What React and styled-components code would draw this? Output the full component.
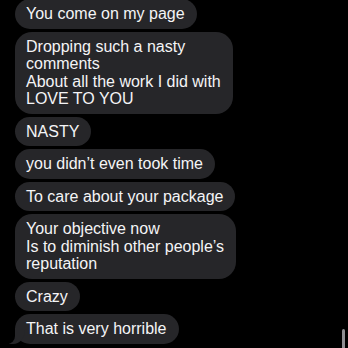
import React from 'react';
import styled, { createGlobalStyle } from 'styled-components';

const Global = createGlobalStyle`
  html, body {
    margin: 0;
    padding: 0;
    background: #000;
    overflow: hidden;
  }
`;

const Screen = styled.div`
  position: relative;
  width: 348px;
  height: 348px;
  background: #000;
  overflow: hidden;
`;

const Thread = styled.div`
  display: flex;
  flex-direction: column;
  align-items: flex-start;
  gap: 3px;
  padding: 0 0 0 15px;
  margin-top: -1px;
  font-family: "Liberation Sans", Arial, sans-serif;
`;

const Bubble = styled.div`
  position: relative;
  background: #262629;
  color: #f4f4f6;
  font-size: 16px;
  line-height: 17.5px;
  padding: 6px 12px 6px 11px;
  border-radius: ${(p) => (p.multi ? '17px' : '15px')};
  white-space: pre-line;

  ${(p) =>
    p.tail &&
    `
    &::before {
      content: '';
      position: absolute;
      left: -6px;
      bottom: 0;
      width: 16px;
      height: 16px;
      background: #262629;
      border-bottom-right-radius: 12px 14px;
    }
    &::after {
      content: '';
      position: absolute;
      left: -11px;
      bottom: 0;
      width: 11px;
      height: 18px;
      background: #000;
      border-bottom-right-radius: 8px;
    }
  `}
`;

const ScrollBar = styled.div`
  position: absolute;
  right: 3px;
  bottom: -4px;
  width: 3px;
  height: 23px;
  border-radius: 2px;
  background: #8e8e92;
`;

const messages = [
  { text: 'You come on my page' },
  {
    text: 'Dropping such a nasty\ncomments\nAbout all the work I did with\nLOVE TO YOU',
    multi: true,
  },
  { text: 'NASTY' },
  { text: 'you didn’t even took time' },
  { text: 'To care about your package' },
  {
    text: 'Your objective now\nIs to diminish other people’s\nreputation',
    multi: true,
  },
  { text: 'Crazy' },
  { text: 'That is very horrible', tail: true },
];

const App = () => {
  return (
    <Screen>
      <Global />
      <Thread>
        {messages.map((m, i) => (
          <Bubble key={i} multi={m.multi} tail={m.tail}>
            {m.text}
          </Bubble>
        ))}
      </Thread>
      <ScrollBar />
    </Screen>
  );
};

export default App;
